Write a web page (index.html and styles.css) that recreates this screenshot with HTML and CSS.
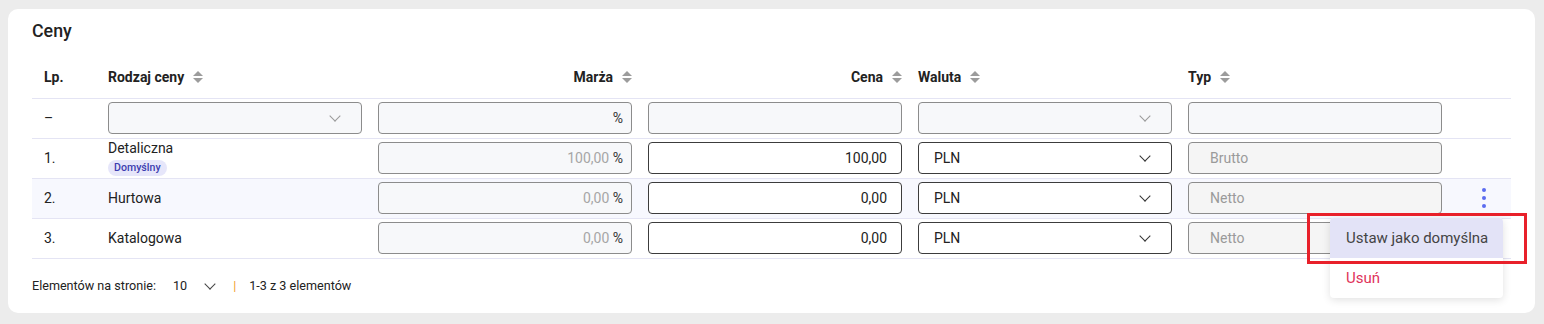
FILE: index.html
```html
<!DOCTYPE html>
<html lang="pl">
<head>
<meta charset="utf-8">
<title>Ceny</title>
<link rel="stylesheet" href="styles.css">
</head>
<body>
<div class="card">
  <h2 class="title">Ceny</h2>
  <table class="grid">
    <colgroup>
      <col class="c-lp"><col class="c-main"><col class="c-main"><col class="c-main"><col class="c-main"><col class="c-main"><col class="c-act">
    </colgroup>
    <thead>
      <tr>
        <th class="lp">Lp.</th>
        <th><span class="hd">Rodzaj ceny <span class="sort"></span></span></th>
        <th class="right"><span class="hd">Marża <span class="sort"></span></span></th>
        <th class="right"><span class="hd">Cena <span class="sort"></span></span></th>
        <th><span class="hd">Waluta <span class="sort"></span></span></th>
        <th><span class="hd">Typ <span class="sort"></span></span></th>
        <th></th>
      </tr>
    </thead>
    <tbody>
      <tr class="filter">
        <td class="lp">–</td>
        <td><div class="field soft select"><span class="chev light"></span></div></td>
        <td><div class="field soft right"><span class="unit">%</span></div></td>
        <td><div class="field soft"></div></td>
        <td><div class="field soft select"><span class="chev light"></span></div></td>
        <td><div class="field soft"></div></td>
        <td></td>
      </tr>
      <tr>
        <td class="lp">1.</td>
        <td class="name-cell"><div class="name">Detaliczna</div><span class="badge">Domyślny</span></td>
        <td><div class="field soft right"><span class="muted">100,00</span>&nbsp;<span class="unit">%</span></div></td>
        <td><div class="field live right pr">100,00</div></td>
        <td><div class="field live select">PLN<span class="chev"></span></div></td>
        <td><div class="field gray typ">Brutto</div></td>
        <td></td>
      </tr>
      <tr class="hover">
        <td class="lp">2.</td>
        <td class="name-cell">Hurtowa</td>
        <td><div class="field soft right"><span class="muted">0,00</span>&nbsp;<span class="unit">%</span></div></td>
        <td><div class="field live right pr">0,00</div></td>
        <td><div class="field live select">PLN<span class="chev"></span></div></td>
        <td><div class="field gray typ">Netto</div></td>
        <td class="act"><span class="kebab"><i></i><i></i><i></i></span></td>
      </tr>
      <tr>
        <td class="lp">3.</td>
        <td class="name-cell">Katalogowa</td>
        <td><div class="field soft right"><span class="muted">0,00</span>&nbsp;<span class="unit">%</span></div></td>
        <td><div class="field live right pr">0,00</div></td>
        <td><div class="field live select">PLN<span class="chev"></span></div></td>
        <td><div class="field gray typ">Netto</div></td>
        <td></td>
      </tr>
    </tbody>
  </table>
  <div class="footer">
    <span>Elementów na stronie:</span>
    <span class="per">10</span>
    <span class="chev small"></span>
    <span class="sep">|</span>
    <span>1-3 z 3 elementów</span>
  </div>

  <div class="menu">
    <div class="item active">Ustaw jako domyślna</div>
    <div class="item danger">Usuń</div>
  </div>
  <div class="mark"></div>
</div>
</body>
</html>
```

FILE: styles.css
```css
* { box-sizing: border-box; }
html, body { margin: 0; padding: 0; }
body {
  background: #ececec;
  font-family: Roboto, "Liberation Sans", Arial, sans-serif;
  color: #222;
  width: 1544px;
  height: 324px;
  overflow: hidden;
  padding: 9px 9px 0 8px;
}
.card {
  position: relative;
  background: #fff;
  border-radius: 10px;
  height: 304px;
  padding: 12px 24px 0 24px;
}
.title {
  margin: 0 0 16px 0;
  font-size: 17.8px;
  line-height: 20px;
  font-weight: 500;
  color: #222;
}
.grid {
  width: 1479px;
  border-collapse: collapse;
  table-layout: fixed;
  font-size: 14px;
}
.c-lp { width: 68px; }
.c-main { width: 270px; }
.c-act { width: 61px; }
.grid th {
  height: 41px;
  padding: 0 8px;
  text-align: left;
  font-size: 14px;
  font-weight: 700;
  color: #222;
  border-bottom: 1px solid #e4e4f4;
  vertical-align: middle;
}
.grid th.right { text-align: right; }
.grid th.lp, .grid td.lp { padding-left: 12px; }
.hd { display: inline-flex; align-items: center; gap: 9px; }
.sort {
  display: inline-flex;
  flex-direction: column;
  gap: 2px;
  width: 10px;
  align-items: center;
}
.sort::before, .sort::after {
  content: "";
  width: 0; height: 0;
  border-left: 5px solid transparent;
  border-right: 5px solid transparent;
}
.sort::before { border-bottom: 5px solid #9c9c9c; }
.sort::after { border-top: 5px solid #9c9c9c; }

.grid td {
  height: 40px;
  padding: 0 8px;
  border-bottom: 1px solid #e4e4f4;
  vertical-align: middle;
  color: #222;
}
.grid tr.hover td { background: #f7f8fe; }
.name-cell { line-height: 17px; }
.name { margin-top: -1px; }
.badge {
  display: inline-block;
  margin-top: 3px;
  height: 16px;
  line-height: 16px;
  padding: 0 6px;
  border-radius: 8px;
  background: #e6e6fa;
  color: #3d3db0;
  font-size: 10.6px;
  font-weight: 500;
}

.field {
  position: relative;
  height: 32px;
  border-radius: 4px;
  border: 1px solid #8c8c8c;
  display: flex;
  align-items: center;
  padding: 0 15px;
  font-size: 14px;
}
.field.right { justify-content: flex-end; padding-right: 8px; }
.field.right.pr { padding-right: 14px; }
.field.soft { background: #f7f8fa; }
.field.gray { background: #f5f5f5; color: #9a9a9a; }
.field.typ { padding-left: 21px; }
.field.live { background: #fff; border-color: #3c3c3c; color: #222; }
.muted { color: #a6a6a6; }
.unit { color: #333; }
.chev {
  position: absolute;
  right: 22px;
  top: 9px;
  width: 8px;
  height: 8px;
  border-right: 1.5px solid #333;
  border-bottom: 1.5px solid #333;
  transform: rotate(45deg);
}
.chev.light { border-color: #9a9a9a; border-width: 0 1.2px 1.2px 0; }

.act { text-align: center; }
.kebab {
  display: inline-flex;
  flex-direction: column;
  gap: 4px;
  margin-left: 6px;
  vertical-align: middle;
}
.kebab i {
  display: block;
  width: 4px; height: 4px;
  border-radius: 50%;
  background: #5b6cf0;
}

.footer {
  display: flex;
  align-items: center;
  height: 40px;
  margin-top: 7px;
  font-size: 12.6px;
  color: #222;
}
.per { margin-left: 17px; }
.chev.small {
  position: static;
  display: inline-block;
  width: 8px; height: 8px;
  margin: -4px 0 0 19px;
  border-width: 0 1.5px 1.5px 0;
  border-color: #444;
}
.sep { color: #f0a030; margin: 0 13px 0 19px; }

.menu {
  position: absolute;
  left: 1322px;
  top: 209px;
  width: 173px;
  background: #fff;
  border-radius: 4px;
  box-shadow: 0 2px 8px rgba(0,0,0,0.12);
  overflow: hidden;
}
.item {
  height: 40px;
  line-height: 40px;
  padding-left: 16px;
  font-size: 15px;
  color: #444;
}
.item.active { background: #e3e3f7; }
.item.danger { color: #e0325a; }
.mark {
  position: absolute;
  left: 1299px;
  top: 204px;
  width: 220px;
  height: 51px;
  border: 3px solid #e8202a;
}
```
